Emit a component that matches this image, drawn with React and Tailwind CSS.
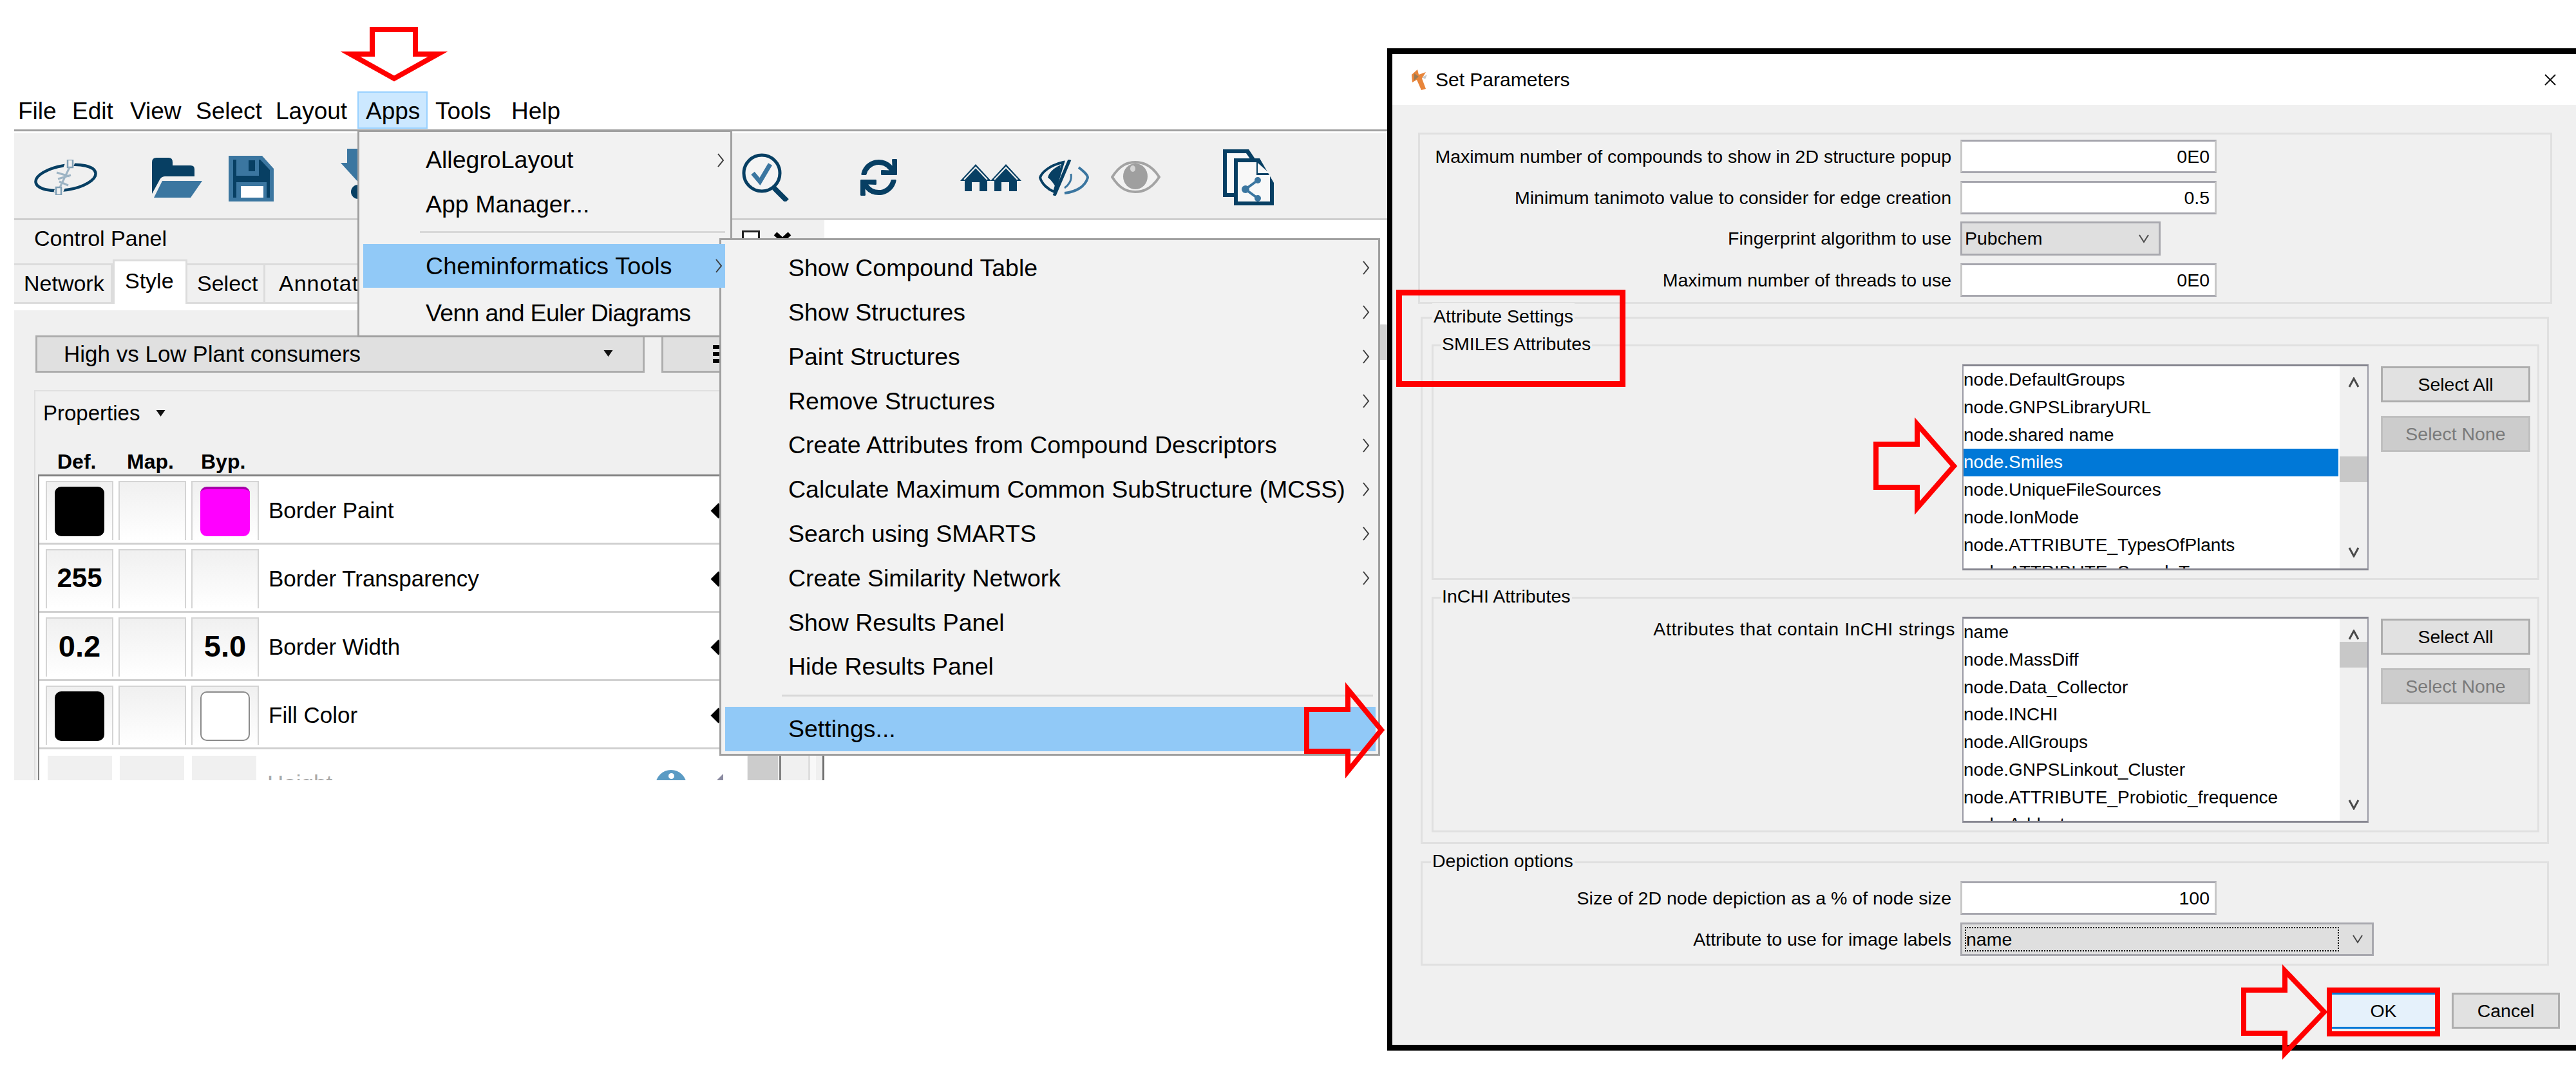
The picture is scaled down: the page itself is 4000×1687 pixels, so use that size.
import React from 'react';
import { FaSync } from 'react-icons/fa';

const DARK = '#073f63';
const LIGHT = '#3b76a0';

const menuBar = [
  { label: 'File', w: 'w-[84px] pl-[6px]' },
  { label: 'Edit', w: 'w-[90px] pl-[6px]' },
  { label: 'View', w: 'w-[102px] pl-[6px]' },
  { label: 'Select', w: 'w-[124px] pl-[6px]' },
  { label: 'Layout', w: 'w-[133px] pl-[6px]' },
  { label: 'Apps', w: 'w-[109px] pl-[11px] bg-[#cce8ff] border-2 border-[#99d1ff]' },
  { label: 'Tools', w: 'w-[124px] pl-[12px]' },
  { label: 'Help', w: 'w-[100px] pl-[6px]' },
];

const chemItems = [
  ['Show Compound Table', true],
  ['Show Structures', true],
  ['Paint Structures', true],
  ['Remove Structures', true],
  ['Create Attributes from Compound Descriptors', true],
  ['Calculate Maximum Common SubStructure (MCSS)', true],
  ['Search using SMARTS', true],
  ['Create Similarity Network', true],
  ['Show Results Panel', false],
  ['Hide Results Panel', false],
];

const smiles = ['node.DefaultGroups', 'node.GNPSLibraryURL', 'node.shared name', 'node.Smiles', 'node.UniqueFileSources', 'node.IonMode', 'node.ATTRIBUTE_TypesOfPlants', 'node.ATTRIBUTE_SampleType'];
const inchi = ['name', 'node.MassDiff', 'node.Data_Collector', 'node.INCHI', 'node.AllGroups', 'node.GNPSLinkout_Cluster', 'node.ATTRIBUTE_Probiotic_frequence', 'node.Adduct'];

const Chevron = ({ className }) => (
  <svg className={className} viewBox="0 0 12 22" fill="none" stroke="#3c3c3c" strokeWidth="2">
    <polyline points="2,1 10,11 2,21" />
  </svg>
);

const Caret = ({ className }) => (
  <svg className={className} viewBox="0 0 14 10" fill="#111">
    <polygon points="0,0 14,0 7,10" />
  </svg>
);

const ComboArrow = ({ className }) => (
  <svg className={className} viewBox="0 0 18 14" fill="none" stroke="#4a4a4a" strokeWidth="2">
    <polyline points="2,1 9,12 16,1" />
  </svg>
);

const Logo = () => (
  <svg className="ml-[30px] mt-[41px] w-[100px] h-[55px] shrink-0" viewBox="0 0 100 55" fill="none">
    <ellipse cx="50" cy="28" rx="47" ry="19" transform="rotate(-9 50 28)" stroke={DARK} strokeWidth="4.5" />
    <path d="M58 2 L38 52" stroke="#f0f0f0" strokeWidth="14" />
    <rect x="53" y="0" width="8" height="12" stroke="#7f9fb5" strokeWidth="2.5" />
    <rect x="35" y="43" width="8" height="12" stroke="#7f9fb5" strokeWidth="2.5" />
    <path d="M56 12 L41 43 M36 20 L56 26 M38 30 L58 24 M40 34 L54 40" stroke="#9db4c4" strokeWidth="3" />
  </svg>
);

const FolderOpen = () => (
  <svg className="ml-[84px] mt-[38px] w-[78px] h-[62px] shrink-0" viewBox="0 0 78 62">
    <path d="M0 7 Q0 0 7 0 H26 Q32 0 32 7 V12 H60 Q66 12 66 18 V29 H20 Q14 29 11 36 L0 56 Z" fill={DARK} />
    <path d="M16 36 H78 L60 62 H3 Z" fill={LIGHT} />
  </svg>
);

const Save = () => (
  <svg className="ml-[41px] mt-[35px] w-[70px] h-[71px] shrink-0" viewBox="0 0 70 71">
    <path d="M0 0 H52 L70 20 V71 H0 Z" fill={LIGHT} />
    <path d="M7 6 H49 L64 22 V65 H7 Z" fill={DARK} />
    <rect x="12" y="4" width="35" height="27" fill={LIGHT} />
    <rect x="31" y="7" width="10" height="17" fill={DARK} />
    <rect x="12" y="41" width="47" height="24" fill={LIGHT} />
    <rect x="19" y="47" width="35" height="18" fill="#fff" />
  </svg>
);

const Import = () => (
  <svg className="ml-[104px] mt-[24px] w-[70px] h-[78px] shrink-0" viewBox="0 0 70 78">
    <polygon points="10,0 50,0 50,22 70,22 30,55 0,22 10,22" fill={LIGHT} />
    <circle cx="27" cy="67" r="11" fill={DARK} />
  </svg>
);

const Magnifier = () => (
  <svg className="ml-[553px] mt-[31px] w-[75px] h-[75px] shrink-0" viewBox="0 0 75 75" fill="none">
    <circle cx="31" cy="31" r="28" fill="#f4f4f4" stroke={DARK} strokeWidth="5" />
    <polyline points="17,31 28,44 44,17" stroke={LIGHT} strokeWidth="7" />
    <line x1="50" y1="54" x2="70" y2="74" stroke={DARK} strokeWidth="8" />
  </svg>
);

const Houses = () => (
  <svg className="ml-[98px] mt-[48px] w-[95px] h-[42px] shrink-0" viewBox="0 0 95 42" fill={DARK}>
    <polygon points="24,0 48,26 42,26 42,42 30,42 30,28 18,28 18,42 7,42 7,26 0,26" />
    <polygon points="71,0 95,26 88,26 88,42 76,42 76,28 64,28 64,42 53,42 53,26 47,26" />
    <polyline points="6,24 24,5 42,24" fill="none" stroke="#f0f0f0" strokeWidth="2" />
    <polyline points="53,24 71,5 89,24" fill="none" stroke="#f0f0f0" strokeWidth="2" />
  </svg>
);

const EyeOff = () => (
  <svg className="ml-[27px] mt-[41px] w-[78px] h-[56px] shrink-0" viewBox="0 0 78 56" fill="none">
    <path d="M38 4 C18 8 4 20 2 28 C5 38 14 46 24 50 Z" fill="#f0f0f0" stroke={DARK} strokeWidth="4" />
    <path d="M34 8 C22 14 16 20 14 28 C18 30 24 38 28 46 Z" fill={DARK} />
    <line x1="48" y1="0" x2="24" y2="56" stroke={DARK} strokeWidth="5" />
    <path d="M62 12 C72 20 76 24 76 28 C72 42 58 50 40 52" stroke={LIGHT} strokeWidth="4" />
    <path d="M50 22 C52 32 46 40 40 44" stroke={LIGHT} strokeWidth="3" />
  </svg>
);

const Eye = () => (
  <svg className="ml-[34px] mt-[43px] w-[77px] h-[50px] shrink-0" viewBox="0 0 77 50" fill="none">
    <path d="M2 25 C14 6 26 2 38 2 C50 2 63 6 75 25 C63 44 50 48 38 48 C26 48 14 44 2 25 Z" fill="#f2f2f2" stroke="#a3a3a3" strokeWidth="4" />
    <ellipse cx="38" cy="24" rx="19" ry="20" fill="#9f9f9f" />
    <ellipse cx="34" cy="12" rx="4" ry="5" fill="#d5d5d5" />
  </svg>
);

const DocShare = () => (
  <svg className="ml-[97px] mt-[25px] w-[79px] h-[87px] shrink-0" viewBox="0 0 79 87">
    <path d="M0 0 H40 L56 24 V74 H0 Z" fill={DARK} />
    <path d="M6 6 H36 L50 26 V68 H6 Z" fill="#f8f8f8" />
    <path d="M17 14 H57 L79 52 V87 H17 Z" fill={DARK} />
    <path d="M23 20 H52 V40 H73 V81 H23 Z" fill="#f8f8f8" />
    <path d="M54 21 L72 37 H54 Z" fill="#f8f8f8" />
    <circle cx="54" cy="48" r="5" fill={LIGHT} />
    <circle cx="35" cy="62" r="6" fill={LIGHT} />
    <circle cx="54" cy="76" r="5" fill={LIGHT} />
    <path d="M54 48 L35 62 L54 76" stroke={LIGHT} strokeWidth="4" fill="none" />
  </svg>
);

const AppIcon = () => (
  <svg className="ml-[28px] w-[27px] h-[32px] shrink-0" viewBox="0 0 27 32">
    <path d="M2 8 L11 0 L13 8 L24 4 L18 14 L24 30 L17 32 L10 16 L3 20 Z" fill="#e8853a" />
    <path d="M6 6 L13 11 L6 17 Z" fill="#9a7a55" />
    <path d="M18 12 L26 8 L23 15 Z" fill="#c9c9c9" />
  </svg>
);

const Cell = ({ children, bold }) => (
  <div className={`w-[105px] h-[92px] border-t-2 border-x-2 border-[#d4d4d4] bg-linear-to-b from-[#f0f0f0] to-white flex items-start justify-center shrink-0 ${bold ? "font-bold" : ""}`}>
    {children}
  </div>
);

const Swatch = ({ className }) => <div className={`w-[77px] h-[77px] mt-[7px] rounded-[10px] ${className}`} />;

const StyleRow = ({ def, byp, label }) => (
  <div className="h-[106px] border-b-[3px] border-[#d0d0d0] bg-white flex items-start pt-[7px] pl-[10px]">
    <Cell bold>{def}</Cell>
    <div className="ml-[8px]"><Cell /></div>
    <div className="ml-[8px]"><Cell bold>{byp}</Cell></div>
    <div className="ml-[15px] h-[92px] flex items-center text-[35px]">{label}</div>
    <div className="ml-auto mr-[36px] mt-[38px] w-[17px] h-[17px] bg-black rotate-45" />
  </div>
);

const Value = ({ children, className }) => <span className={`leading-[86px] ${className}`}>{children}</span>;

const GroupBox = ({ title, titleLeft, className, children }) => (
  <div className={`relative border-[3px] border-[#e0e0e0] ${className}`}>
    <span className={`absolute -top-[24px] ${titleLeft} bg-[#f0f0f0] px-[2px] h-[40px] leading-[40px] text-[28.5px] whitespace-nowrap`}>{title}</span>
    {children}
  </div>
);

const Field = ({ label, value, mt }) => (
  <div className={`flex ${mt}`}>
    <div className="w-[825px] h-[52px] leading-[52px] text-right text-[28.5px] whitespace-nowrap">{label}</div>
    <div className="ml-[14px] w-[398px] h-[52px] bg-white border-[3px] border-t-[#a6a6ae] border-b-[#a6a6ae] border-x-[#c8c8c8] text-right pr-[8px] leading-[46px] text-[28.5px]">{value}</div>
  </div>
);

const DlgButton = ({ children, disabled, className }) => (
  <div className={`w-[232px] h-[56px] flex items-center justify-center text-[28.5px] border-[3px] ${disabled ? "bg-[#cccccc] border-[#bfbfbf] text-[#7a7a7a]" : "bg-[#e1e1e1] border-[#adadad]"} ${className}`}>{children}</div>
);

const ScrollArrow = ({ up, className }) => (
  <svg className={className} viewBox="0 0 18 16" fill="none" stroke="#4a4a4a" strokeWidth="3">
    <polyline points={up ? "2,15 9,2 16,15" : "2,1 9,14 16,1"} />
  </svg>
);

const ListBox = ({ items, selected, thumbTop }) => (
  <div className="w-[631px] h-[320px] border-t-[3px] border-b-[3px] border-x-2 border-t-[#85858f] border-b-[#85858f] border-x-[#9a9aa5] bg-white flex shrink-0">
    <div className="w-[582px] h-[314px] overflow-hidden">
      {items.map((item, i) => (
        <div key={item} className={`h-[42.75px] leading-[42.75px] text-[28px] whitespace-nowrap ${i === selected ? "bg-[#0078d7] text-white" : ""}`}>{item}</div>
      ))}
    </div>
    <div className="ml-[2px] w-[43px] h-[314px] bg-[#f0f0f0] flex flex-col items-center">
      <ScrollArrow up className="mt-[17px] w-[18px] h-[16px] shrink-0" />
      <div className={`w-full h-[40px] bg-[#c8c8c8] shrink-0 ${thumbTop}`} />
      <ScrollArrow className="mt-auto mb-[17px] w-[18px] h-[16px] shrink-0" />
    </div>
  </div>
);

export default function App() {
  return (
    <div className="relative w-[4000px] h-[1687px] bg-white overflow-hidden flex items-start text-black font-['Liberation_Sans',sans-serif]">
      {/* cytoscape window */}
      <div className="ml-[22px] w-[2132px] h-[1212px] pt-[142px] shrink-0 overflow-hidden flex flex-col">
        <div className="h-[58px] flex shrink-0">
          {menuBar.map((m) => (
            <div key={m.label} className={`${m.w} h-[58px] pt-[3px] flex items-center text-[37px] shrink-0`}>{m.label}</div>
          ))}
        </div>
        <div className="h-[3px] mt-[1px] bg-[#a0a0a0] shrink-0" />
        <div className="h-[3px] shrink-0" />
        <div className="h-[132px] bg-[#f0f0f0] flex items-start shrink-0">
          <Logo />
          <FolderOpen />
          <Save />
          <Import />
          <Magnifier />
          <FaSync className="ml-[109px] mt-[40px] shrink-0" size={57} color={DARK} />
          <Houses />
          <EyeOff />
          <Eye />
          <DocShare />
        </div>
        <div className="h-[3px] bg-[#cecece] shrink-0" />
        <div className="flex flex-1 min-h-0">
          {/* control panel */}
          <div className="w-[1138px] bg-[#f0f0f0] flex flex-col shrink-0">
            <div className="h-[56px] mb-[11px] pl-[31px] flex items-center text-[34px] shrink-0">Control Panel</div>
            <div className="h-[63px] flex text-[34px] shrink-0">
              <div className="w-[153px] border-[3px] border-l-0 border-[#dcdcdc] flex items-center pl-[15px]">Network</div>
              <div className="w-[116px] h-[79px] -mt-[6px] bg-white border-x-[3px] border-t-[3px] border-[#dcdcdc] flex items-center pl-[16px] pb-[16px]">Style</div>
              <div className="w-[121px] border-y-[3px] border-r-[3px] border-[#dcdcdc] flex items-center pl-[15px]">Select</div>
              <div className="flex-1 border-y-[3px] border-[#dcdcdc] flex items-center pl-[21px] tracking-[1px]">Annotation</div>
            </div>
            <div className="h-[10px] bg-white shrink-0" />
            <div className="mt-[39px] ml-[33px] flex shrink-0">
              <div className="relative w-[946px] h-[58px] bg-[#e0e0e0] border-[3px] border-[#adadad] flex items-center pl-[41px] text-[35px]">
                High vs Low Plant consumers
                <Caret className="absolute left-[879px] top-[20px] w-[15px] h-[10px]" />
              </div>
              <div className="ml-[26px] w-[100px] h-[58px] bg-[#e0e0e0] border-[3px] border-[#adadad] flex flex-col justify-center gap-[5px] pl-[77px]">
                <div className="h-[6px] w-[18px] bg-black" />
                <div className="h-[6px] w-[18px] bg-black" />
                <div className="h-[6px] w-[18px] bg-black" />
              </div>
            </div>
            <div className="mt-[27px] ml-[31px] border-t-2 border-l-2 border-[#e0e0e0] flex-1 flex flex-col">
              <div className="h-[68px] flex items-center pl-[12px] text-[33px] shrink-0">
                Properties
                <Caret className="ml-[25px] w-[15px] h-[10px]" />
              </div>
              <div className="h-[61px] pt-[20px] flex items-center text-[32px] font-bold shrink-0">
                <span className="ml-[34px] w-[108px]">Def.</span>
                <span className="w-[115px]">Map.</span>
                <span>Byp.</span>
              </div>
              <div className="ml-[4px] border-t-[3px] border-l-[2px] border-[#808080] flex-1 flex flex-col">
                <StyleRow def={<Swatch className="bg-black" />} byp={<Swatch className="bg-[#ff00ff] border-t-4 border-[#a800a8]" />} label="Border Paint" />
                <StyleRow def={<Value className="text-[42px]">255</Value>} label="Border Transparency" />
                <StyleRow def={<Value className="text-[47px]">0.2</Value>} byp={<Value className="text-[47px]">5.0</Value>} label="Border Width" />
                <StyleRow def={<Swatch className="bg-black" />} byp={<Swatch className="bg-white border-2 border-[#8a8a8a]" />} label="Fill Color" />
                <div className="flex-1 bg-white flex items-start pt-[10px] pl-[13px]">
                  <div className="w-[100px] h-[92px] bg-[#f0f0f0] shrink-0" />
                  <div className="ml-[12px] w-[100px] h-[92px] bg-[#f0f0f0] shrink-0" />
                  <div className="ml-[12px] w-[100px] h-[92px] bg-[#f0f0f0] shrink-0" />
                  <div className="ml-[17px] h-[86px] flex items-center text-[35px] text-[#a8a8a8]">Height</div>
                  <div className="ml-auto mr-[44px] mt-[22px] w-[48px] h-[48px] rounded-full bg-[#5b9bc4] flex justify-center pt-[5px] shrink-0">
                    <div className="w-[9px] h-[9px] bg-white rounded-full" />
                  </div>
                  <svg className="mr-[37px] mt-[28px] w-[13px] h-[13px] shrink-0" viewBox="0 0 13 13" fill="#8a8aa0"><polygon points="13,0 13,13 0,13" /></svg>
                </div>
              </div>
            </div>
          </div>
          {/* narrow column next to the panel */}
          <div className="w-[120px] bg-[#f0f0f0] flex flex-col shrink-0">
            <div className="h-[30px] -ml-[8px] pt-[16px] flex items-start shrink-0">
              <div className="w-[28px] h-[28px] border-[3px] border-[#222] bg-white shrink-0" />
              <svg className="ml-[21px] mt-[3px] w-[28px] h-[24px] shrink-0" viewBox="0 0 28 24" stroke="#000" strokeWidth="7"><path d="M3 2 L25 22 M25 2 L3 22" /></svg>
            </div>
            <div className="flex flex-1 min-h-0">
              <div className="ml-[1px] w-[47px] bg-[#cccccc]" />
              <div className="ml-[2px] w-[3px] bg-[#808080]" />
              <div className="ml-[42px] w-[3px] bg-[#dedede]" />
              <div className="w-[9px] bg-[#f8f8f8]" />
              <div className="ml-[10px] w-[3px] bg-[#707070]" />
            </div>
          </div>
          <div className="flex-1 bg-white flex justify-end items-start">
            <div className="mt-[162px] w-[11px] h-[55px] bg-[#d0d0d0]" />
          </div>
        </div>
      </div>

      {/* set parameters dialog */}
      <div className="mt-[75px] w-[1846px] h-[1557px] border-y-[9px] border-l-[8px] border-black flex flex-col shrink-0">
        <div className="h-[79px] bg-white flex items-center shrink-0">
          <AppIcon />
          <span className="ml-[12px] text-[30px]">Set Parameters</span>
          <svg className="ml-auto mr-[31px] w-[18px] h-[18px] shrink-0" viewBox="0 0 18 18" stroke="#111" strokeWidth="2"><path d="M1 1 L17 17 M17 1 L1 17" /></svg>
        </div>
        <div className="flex-1 bg-[#f0f0f0] flex flex-col">
          <div className="mt-[43px] ml-[40px] w-[1761px] h-[266px] border-[3px] border-[#e0e0e0] pt-[8px] flex flex-col shrink-0">
            <Field label="Maximum number of compounds to show in 2D structure popup" value="0E0" />
            <Field mt="mt-[12px]" label="Minimum tanimoto value to consider for edge creation" value="0.5" />
            <div className="flex mt-[11px]">
              <div className="w-[825px] h-[53px] leading-[53px] text-right text-[28.5px] whitespace-nowrap">Fingerprint algorithm to use</div>
              <div className="ml-[14px] w-[311px] h-[53px] bg-[#dfdfdf] border-[3px] border-[#a8a8ae] flex items-center pl-[4px] text-[28.5px]">
                Pubchem
                <ComboArrow className="ml-auto mr-[14px] w-[18px] h-[14px]" />
              </div>
            </div>
            <Field mt="mt-[12px]" label="Maximum number of threads to use" value="0E0" />
          </div>

          <GroupBox title="Attribute Settings" titleLeft="left-[15px]" className="mt-[20px] ml-[44px] w-[1752px] h-[819px] shrink-0">
            <GroupBox title="SMILES Attributes" titleLeft="left-[11px]" className="mt-[40px] ml-[14px] w-[1720px] h-[366px]">
              <div className="pt-[28px] pl-[821px] flex">
                <ListBox items={smiles} selected={3} thumbTop="mt-[107px]" />
                <div className="ml-[19px] mt-[3px] flex flex-col gap-[21px]">
                  <DlgButton>Select All</DlgButton>
                  <DlgButton disabled>Select None</DlgButton>
                </div>
              </div>
            </GroupBox>
            <GroupBox title="InCHI Attributes" titleLeft="left-[11px]" className="mt-[26px] ml-[14px] w-[1720px] h-[366px]">
              <div className="pt-[28px] flex">
                <div className="w-[810px] mr-[11px] h-[38px] leading-[38px] text-right text-[28.5px] tracking-[0.55px] whitespace-nowrap">Attributes that contain InCHI strings</div>
                <ListBox items={inchi} selected={-1} thumbTop="mt-[3px]" />
                <div className="ml-[19px] mt-[3px] flex flex-col gap-[21px]">
                  <DlgButton>Select All</DlgButton>
                  <DlgButton disabled>Select None</DlgButton>
                </div>
              </div>
            </GroupBox>
          </GroupBox>

          <GroupBox title="Depiction options" titleLeft="left-[13px]" className="mt-[27px] ml-[44px] w-[1752px] h-[162px] pt-[28px] shrink-0">
            <div className="-ml-[4px]">
              <Field label="Size of 2D node depiction as a % of node size" value="100" />
              <div className="flex mt-[12px]">
                <div className="w-[825px] h-[52px] leading-[52px] text-right text-[28.5px] whitespace-nowrap">Attribute to use for image labels</div>
                <div className="ml-[14px] w-[642px] h-[52px] bg-[#dfdfdf] border-[3px] border-[#a8a8ae] flex items-center pl-[4px] text-[28.5px]">
                  <div className="w-[581px] h-[38px] border-2 border-dotted border-black flex items-center leading-none">name</div>
                  <ComboArrow className="ml-[20px] w-[18px] h-[14px]" />
                </div>
              </div>
            </div>
          </GroupBox>

          <div className="mt-[42px] flex justify-end gap-[26px] pr-[25px] shrink-0">
            <div className="w-[160px] h-[56px] bg-[#e5f1fb] border-y-[3px] border-[#0078d7] flex items-center justify-center text-[28.5px]">OK</div>
            <div className="w-[168px] h-[56px] bg-[#e1e1e1] border-[3px] border-[#adadad] flex items-center justify-center text-[28.5px]">Cancel</div>
          </div>
        </div>
      </div>

      {/* open menus */}
      <div className="absolute left-[555px] top-[202px] w-[582px] h-[322px] bg-[#f2f2f2] border-[3px] border-[#a0a0a0] pt-[9px] text-[37.5px]">
        <div className="h-[69px] pl-[103px] flex items-center">AllegroLayout<Chevron className="ml-auto mr-[9px] w-[12px] h-[22px]" /></div>
        <div className="h-[69px] pl-[103px] flex items-center">App Manager...</div>
        <div className="h-[27px] pt-[7px] pl-[94px] pr-[8px]"><div className="h-[3px] bg-[#d8d8d8]" /></div>
        <div className="ml-[6px] w-[562px] h-[68px] bg-[#91c9f7] pl-[97px] flex items-center tracking-[0.2px]">Cheminformatics Tools</div>
        <div className="mt-[5px] h-[68px] pl-[103px] flex items-center tracking-[-0.7px]">Venn and Euler Diagrams</div>
      </div>
      <div className="absolute left-[1117px] top-[370px] w-[1026px] h-[804px] bg-[#f2f2f2] border-[3px] border-[#a0a0a0] pt-[9px] text-[37.5px]">
        {chemItems.map(([label, sub]) => (
          <div key={label} className="h-[68.8px] pl-[104px] flex items-center whitespace-nowrap">
            {label}
            {sub && <Chevron className="ml-auto mr-[13px] w-[12px] h-[22px]" />}
          </div>
        ))}
        <div className="h-[28px] pt-[9px] pl-[94px] pr-[8px]"><div className="h-[3px] bg-[#d8d8d8]" /></div>
        <div className="ml-[6px] w-[1010px] h-[69px] bg-[#91c9f7] pl-[98px] flex items-center">Settings...</div>
      </div>
      <div className="absolute left-[1117px] top-[379px] w-[9px] h-[68px] bg-[#91c9f7]" />
      <Chevron className="absolute left-[1110px] top-[402px] w-[12px] h-[22px]" />

      {/* red annotations */}
      <svg className="absolute left-[530px] top-[42px] w-[164px] h-[86px] overflow-visible" viewBox="0 0 164 86" fill="none" stroke="#ff0000" strokeWidth="8" strokeMiterlimit="10">
        <polygon points="48,4 115,4 115,42 150,42 82,80 14,42 48,42" />
      </svg>
      <svg className="absolute left-[2025px] top-[1059px] w-[129px] h-[151px] overflow-visible" viewBox="0 0 129 151" fill="none" stroke="#ff0000" strokeWidth="8" strokeMiterlimit="10">
        <polygon points="4,43 68,43 68,12 120,75 68,139 68,108 4,108" />
      </svg>
      <svg className="absolute left-[2909px] top-[647px] w-[132px] h-[154px] overflow-visible" viewBox="0 0 132 154" fill="none" stroke="#ff0000" strokeWidth="8" strokeMiterlimit="10">
        <polygon points="4,43 68,43 68,12 125,77 68,142 68,110 4,110" />
      </svg>
      <svg className="absolute left-[3480px] top-[1496px] w-[137px] h-[152px] overflow-visible" viewBox="0 0 137 152" fill="none" stroke="#ff0000" strokeWidth="8" strokeMiterlimit="10">
        <polygon points="4,42 68,42 68,12 129,76 68,140 68,109 4,109" />
      </svg>
      <div className="absolute left-[2168px] top-[450px] w-[356px] h-[151px] border-[9px] border-[#ff0000]" />
      <div className="absolute left-[3613px] top-[1534px] w-[176px] h-[76px] border-[8px] border-[#ff0000]" />
    </div>
  );
}
